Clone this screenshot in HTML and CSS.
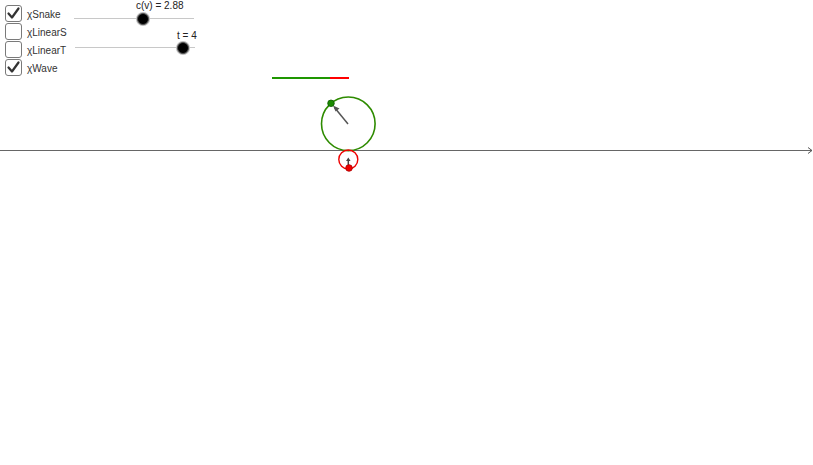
FILE: index.html
```html
<!DOCTYPE html>
<html>
<head>
<meta charset="utf-8">
<link rel="stylesheet" href="styles.css">
</head>
<body>
<div class="applet">
  <svg class="canvas" width="813" height="465" viewBox="0 0 813 465">
    <line x1="0" y1="150.5" x2="812" y2="150.5" stroke="#666" stroke-width="1"/>
    <path d="M808,147.5 L812,150.5 L808,153.5" fill="none" stroke="#555" stroke-width="1"/>
    <line x1="272" y1="78" x2="330" y2="78" stroke="#1e9600" stroke-width="2"/>
    <line x1="330" y1="78" x2="349" y2="78" stroke="#f00" stroke-width="2"/>
    <circle cx="348.3" cy="123.8" r="26.8" fill="none" stroke="#2e8b00" stroke-width="1.6"/>
    <line x1="348" y1="124" x2="334.5" y2="107.5" stroke="#555" stroke-width="1.5"/>
    <path d="M333,105.5 L339.5,108.5 L335.5,111.5 Z" fill="#555"/>
    <circle cx="331" cy="103.3" r="3.3" fill="#1a8a00" stroke="#0d5c00" stroke-width="0.8"/>
    <circle cx="348.3" cy="159.5" r="9.5" fill="none" stroke="#e00" stroke-width="1.4"/>
    <line x1="348.3" y1="167" x2="348.3" y2="159.5" stroke="#444" stroke-width="1.5"/>
    <path d="M346,161 L348.3,157.5 L350.6,161 Z" fill="#444"/>
    <circle cx="349" cy="168" r="3.3" fill="#e00" stroke="#a00" stroke-width="0.8"/>
  </svg>

  <div class="checks">
    <label class="check"><span class="box on"><svg viewBox="0 0 17 17" width="17" height="17"><path d="M3.5,8.5 L7,12.5 L13.5,3.5" fill="none" stroke="#333" stroke-width="2.2" stroke-linecap="round" stroke-linejoin="round"/></svg></span><span class="lbl">χSnake</span></label>
    <label class="check"><span class="box"></span><span class="lbl">χLinearS</span></label>
    <label class="check"><span class="box"></span><span class="lbl">χLinearT</span></label>
    <label class="check"><span class="box on"><svg viewBox="0 0 17 17" width="17" height="17"><path d="M3.5,8.5 L7,12.5 L13.5,3.5" fill="none" stroke="#333" stroke-width="2.2" stroke-linecap="round" stroke-linejoin="round"/></svg></span><span class="lbl">χWave</span></label>
  </div>

  <div class="slider s1">
    <div class="track"></div>
    <div class="knob" style="left:63px"></div>
    <div class="val v1">c(v) = 2.88</div>
  </div>
  <div class="slider s2">
    <div class="track"></div>
    <div class="knob" style="left:102px"></div>
    <div class="val v2">t = 4</div>
  </div>
</div>
</body>
</html>
```

FILE: styles.css
```css
html, body {
  margin: 0;
  padding: 0;
  background: #fff;
}
.applet {
  position: relative;
  width: 813px;
  height: 465px;
  overflow: hidden;
  font-family: "Liberation Sans", Arial, sans-serif;
  font-size: 10px;
  color: #333;
}
.canvas {
  position: absolute;
  left: 0;
  top: 0;
}
.checks {
  position: absolute;
  left: 5px;
  top: 5px;
  display: flex;
  flex-direction: column;
  gap: 1px;
}
.check {
  display: flex;
  align-items: center;
  gap: 5px;
  height: 17px;
}
.box {
  width: 15px;
  height: 15px;
  border: 1px solid #7a7a7a;
  border-radius: 3px;
  background: #fff;
  position: relative;
}
.box svg {
  position: absolute;
  left: -1px;
  top: -1px;
}
.lbl {
  line-height: 17px;
  padding-top: 1px;
}
.slider {
  position: absolute;
  width: 120px;
  height: 12px;
}
.s1 { left: 74px; top: 13px; }
.s2 { left: 75px; top: 42px; }
.track {
  position: absolute;
  left: 0;
  right: 0;
  top: 5px;
  height: 1px;
  background: #c8c8c8;
}
.knob {
  position: absolute;
  top: 0;
  width: 10px;
  height: 10px;
  border-radius: 50%;
  background: #000;
  border: 1px solid #555;
  box-shadow: 0 0 0 1px #bbb;
}
.val {
  position: absolute;
  white-space: nowrap;
  font-size: 10px;
  color: #222;
}
.v1 { left: 62px; top: -13px; }
.v2 { left: 102px; top: -12px; }
```
